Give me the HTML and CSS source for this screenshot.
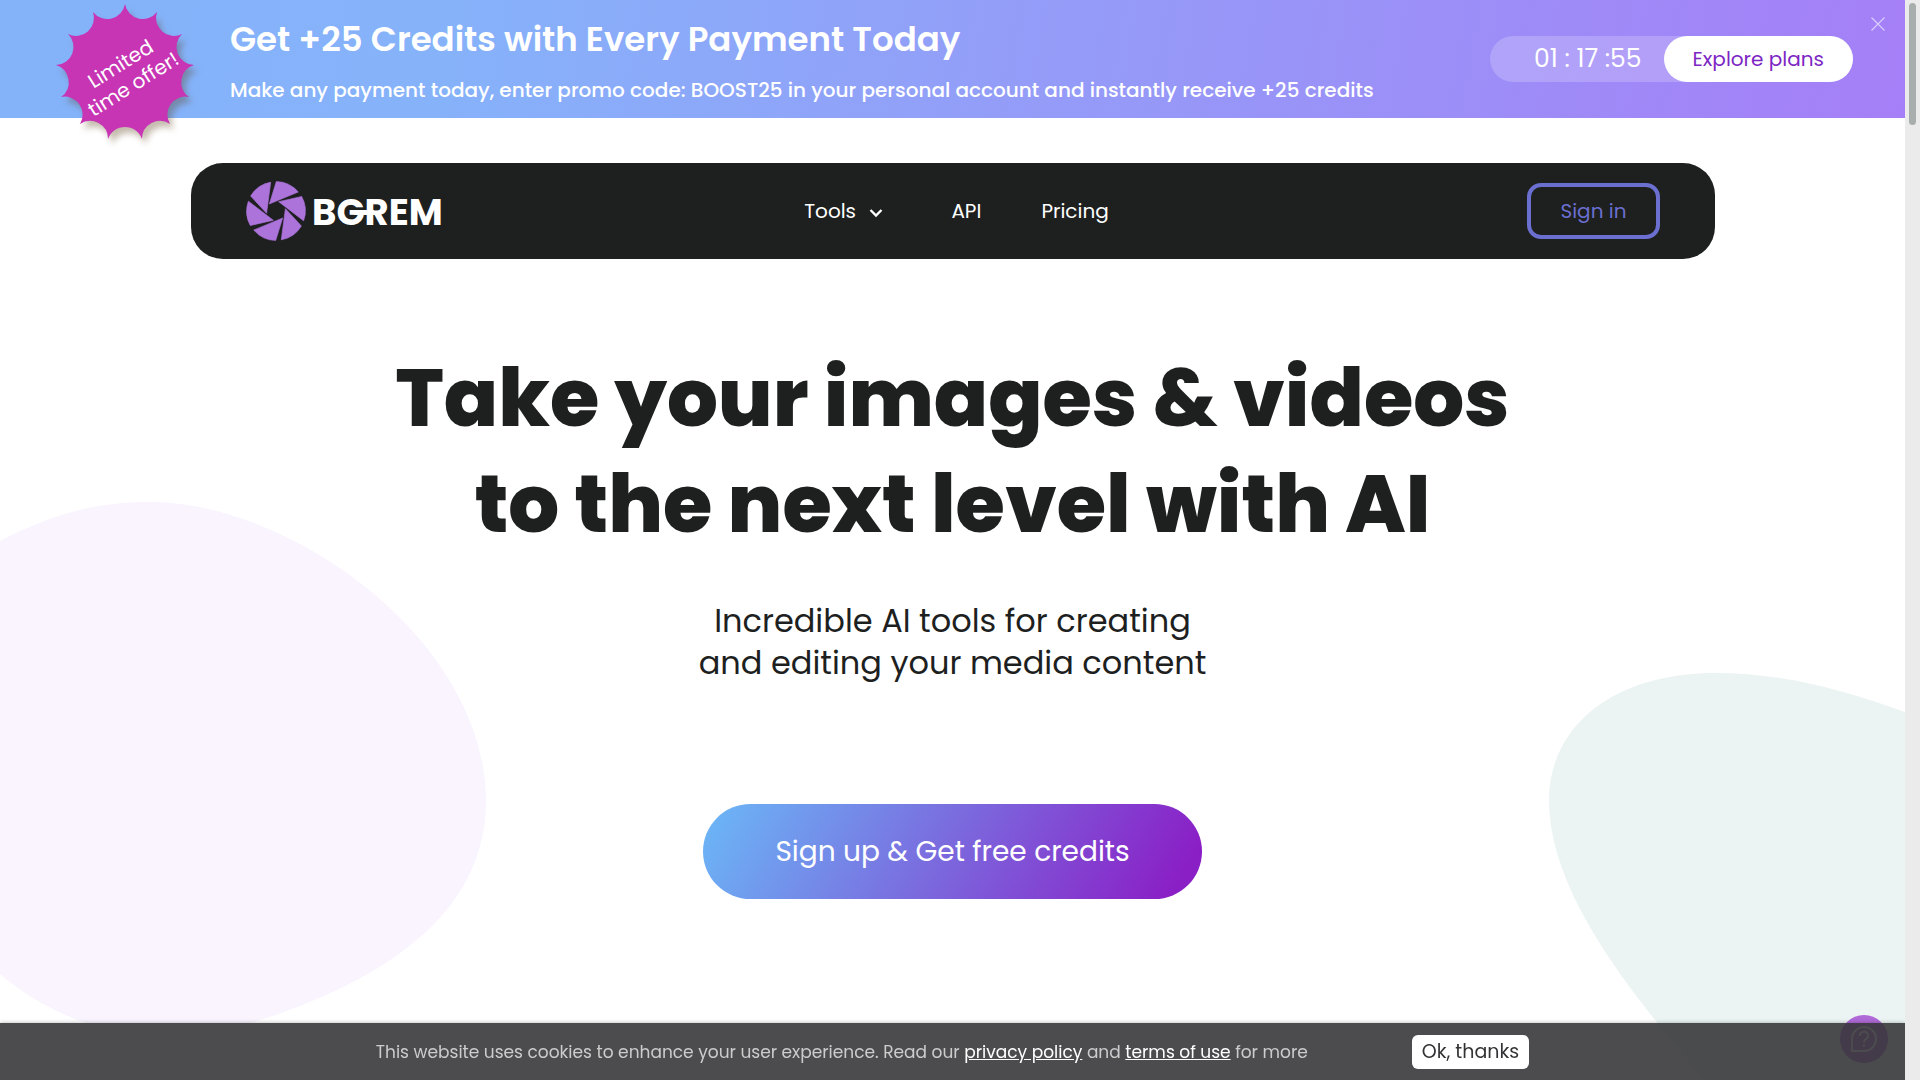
FILE: index.html
```html
<!DOCTYPE html>
<html lang="en">
<head>
    <meta charset="UTF-8">
    <meta name="viewport" content="width=device-width, initial-scale=1.0">
    <title>BGREM</title>
    <link rel="stylesheet" href="styles.css">
</head>
<body>
    <div class="page">
        <div class="promo">
            <div class="promo-badge">
                <svg viewBox="0 0 150 150" aria-hidden="true">
                    <path fill="#c734b4" d="M75 4A18 18 0 0 0 107 12A18 18 0 0 0 132 34A18 18 0 0 0 144 65A18 18 0 0 0 139 97A18 18 0 0 0 120 124A18 18 0 0 0 92 139A18 18 0 0 0 58 139A18 18 0 0 0 30 124A18 18 0 0 0 11 97A18 18 0 0 0 6 65A18 18 0 0 0 18 34A18 18 0 0 0 43 12A18 18 0 0 0 75 4Z"/>
                </svg>
                <span>Limited<br>time offer!</span>
            </div>
            <div class="promo-text">
                <h2>Get +25 Credits with Every Payment Today</h2>
                <p>Make any payment today, enter promo code: BOOST25 in your personal account and instantly receive +25 credits</p>
            </div>
            <div class="promo-action">
                <span class="timer">01 : 17 :55</span>
                <a href="#" class="plans">Explore plans</a>
            </div>
            <button type="button" class="promo-close" aria-label="Close">
                <svg viewBox="0 0 14 14" width="14" height="14"><path d="M0.5 0.5L13.5 13.5M13.5 0.5L0.5 13.5" stroke="#d8cdfc" stroke-width="1.2"/></svg>
            </button>
        </div>

        <header class="header">
            <a href="#" class="logo" aria-label="BGREM">
                <svg viewBox="0 0 200 60" width="200" height="60">
                    <defs>
                        <path id="blade" d="M0.3 -29.5A29.5 29.5 0 0 1 22.3 -19L-6.7 -7Z"/>
                    </defs>
                    <g transform="translate(30 30)" fill="#ac74db" stroke="#ac74db" stroke-width="0.6" stroke-linejoin="round">
                        <use href="#blade"/>
                        <use href="#blade" transform="rotate(60)"/>
                        <use href="#blade" transform="rotate(120)"/>
                        <use href="#blade" transform="rotate(180)"/>
                        <use href="#blade" transform="rotate(240)"/>
                        <use href="#blade" transform="rotate(300)"/>
                    </g>
                    <text class="logo-text" x="66" y="44">BGREM</text>
                    <rect x="108" y="29" width="20" height="5" fill="#fff"/>
                </svg>
            </a>
            <nav class="nav">
                <a href="#" class="has-menu">Tools
                    <svg viewBox="0 0 14 10" width="14" height="10"><path d="M1.5 2L7 7.5L12.5 2" fill="none" stroke="#fff" stroke-width="2.4"/></svg>
                </a>
                <a href="#">API</a>
                <a href="#">Pricing</a>
            </nav>
            <a href="#" class="sign-in">Sign in</a>
        </header>

        <main class="hero">
            <h1>Take your images &amp; videos<br>to the next level with AI</h1>
            <p>Incredible AI tools for creating<br>and editing your media content</p>
            <a href="#" class="sign-up">Sign up &amp; Get free credits</a>
        </main>

        <!-- background shapes -->
        <svg class="blob blob-left" viewBox="0 0 490 540" aria-hidden="true">
            <path fill="#f9f4fd" d="M0 40C50 14 95 1 150 1C292 1 486 140 486 300C486 420 370 485 251 522C200 538 130 538 86 522C50 510 20 490 0 473Z"/>
        </svg>
        <svg class="blob blob-right" viewBox="0 0 356 410" aria-hidden="true">
            <path fill="#ebf4f3" d="M356 40C290 16 230 1 166 1C66 1 0 53 0 128C0 198 46 273 106 348L156 410H356Z"/>
        </svg>
    </div>

    <button type="button" class="help" aria-label="Help">
        <svg viewBox="0 0 28 28" width="28" height="28" fill="none" stroke="#fff" stroke-width="2">
            <path d="M2 26V14A12 12 0 1 1 14 26Z"/>
            <path d="M10 11A4 4 0 1 1 16 14Q14 15 14 17.500M14 19.500V21.500"/>
        </svg>
    </button>

    <div class="cookies">
        <p>This website uses cookies to enhance your user experience. Read our <a href="#">privacy policy</a> and <a href="#">terms of use</a> for more</p>
        <button type="button">Ok, thanks</button>
    </div>

    <div class="scrollbar"><div class="thumb"></div></div>
</body>
</html>
```

FILE: styles.css
```css
* {
    box-sizing: border-box;
}
body {
    margin: 0;
    padding-right: 15px;
    font-family: Poppins, Inter, sans-serif;
    color: #1e1f1f;
    background: #fff;
}
h1, h2, p {
    margin: 0;
}
a {
    color: inherit;
    text-decoration: none;
}
button {
    font-family: inherit;
    border: none;
    cursor: pointer;
}
.page {
    position: relative;
    height: 100vh;
    overflow: hidden;
}

/* promo */
.promo {
    position: relative;
    display: flex;
    align-items: center;
    height: 118px;
    padding: 0 52px 0 50px;
    color: #fff;
    background: linear-gradient(100deg, #84b3fa 0%, #86b2fa 24%, #929ff8 50%, #a57ff7 100%);
}
.promo-badge {
    position: relative;
    align-self: flex-start;
    display: grid;
    place-items: center;
    width: 150px;
    height: 150px;
}
.promo-badge svg {
    position: absolute;
    inset: 0;
    filter: drop-shadow(4px 6px 3px rgba(90, 60, 20, 0.35));
}
.promo-badge span {
    position: relative;
    padding-left: 4px;
    font-size: 20px;
    line-height: 24px;
    text-align: center;
    transform: rotate(-32deg);
}
.promo-text {
    flex: 1;
    margin-left: 30px;
    padding-top: 10px;
}
.promo-text h2 {
    font-size: 34px;
    font-weight: 600;
    line-height: 52px;
}
.promo-text p {
    font-size: 20px;
    font-weight: 500;
    line-height: 50px;
}
.promo-action {
    display: flex;
    height: 46px;
    border-radius: 23px;
    background: rgba(255, 255, 255, 0.2);
}
.timer {
    padding: 0 22px 0 44px;
    font-size: 25px;
    line-height: 46px;
}
.plans {
    padding: 0 29px;
    border-radius: 23px;
    font-size: 20px;
    line-height: 46px;
    color: #7d26c4;
    background: #fff;
}
.promo-close {
    position: absolute;
    top: 17px;
    right: 20px;
    padding: 0;
    line-height: 0;
    background: none;
}

/* header */
.header {
    position: relative;
    z-index: 1;
    display: grid;
    grid-template-columns: 1fr auto 1fr;
    align-items: center;
    width: 80%;
    height: 96px;
    margin: 45px auto 0;
    padding: 0 55px;
    border-radius: 32px;
    color: #fff;
    background: #1e1f1f;
}
.logo {
    line-height: 0;
}
.logo-text {
    font-size: 37px;
    font-weight: 700;
    fill: #fff;
}
.nav {
    display: flex;
    gap: 60px;
    padding-left: 8px;
    font-size: 20px;
    line-height: 30px;
}
.nav .has-menu {
    padding-right: 8px;
}
.nav svg {
    margin-left: 8px;
}
.sign-in {
    justify-self: end;
    padding: 0 29px;
    border: 4px solid #6b6fd0;
    border-radius: 14px;
    font-size: 20px;
    line-height: 48px;
    color: #6b6fd0;
}

/* hero */
.hero {
    position: relative;
    z-index: 1;
    padding-top: 86px;
    text-align: center;
}
.hero h1 {
    font-size: 80px;
    font-weight: 800;
    line-height: 106px;
}
.hero p {
    margin-top: 43px;
    font-size: 32px;
    line-height: 42px;
}
.sign-up {
    display: inline-block;
    margin-top: 120px;
    padding: 0 72px;
    border-radius: 48px;
    font-size: 28px;
    line-height: 95px;
    color: #fff;
    background: linear-gradient(120deg, #6cb2f5 4%, #8a1fc6 94%);
}
.blob {
    position: absolute;
}
.blob-left {
    top: 501px;
    left: 0;
    width: 490px;
}
.blob-right {
    top: 672px;
    right: 0;
    width: 356px;
}

/* help + cookies */
.help {
    position: fixed;
    right: 32px;
    bottom: 17px;
    display: grid;
    place-items: center;
    width: 48px;
    height: 48px;
    padding: 0;
    border-radius: 50%;
    background: #b06ad8;
}
.cookies {
    position: fixed;
    left: 0;
    right: 15px;
    bottom: 0;
    display: flex;
    align-items: center;
    justify-content: center;
    gap: 104px;
    height: 57px;
    color: #ccc;
    background: rgba(51, 51, 53, 0.88);
    box-shadow: 0 0 4px rgba(0, 0, 0, 0.3);
}
.cookies p {
    font-size: 17px;
}
.cookies a {
    color: #fff;
    text-decoration: underline;
}
.cookies button {
    height: 34px;
    padding: 0 10px;
    border-radius: 6px;
    font-size: 19px;
    color: #333335;
    background: #fff;
}

.scrollbar {
    position: fixed;
    top: 0;
    right: 0;
    bottom: 0;
    width: 15px;
    padding: 3px 4px;
    background: #ebebeb;
}
.thumb {
    width: 7px;
    height: 122px;
    border-radius: 4px;
    background: #a8adad;
}
```
